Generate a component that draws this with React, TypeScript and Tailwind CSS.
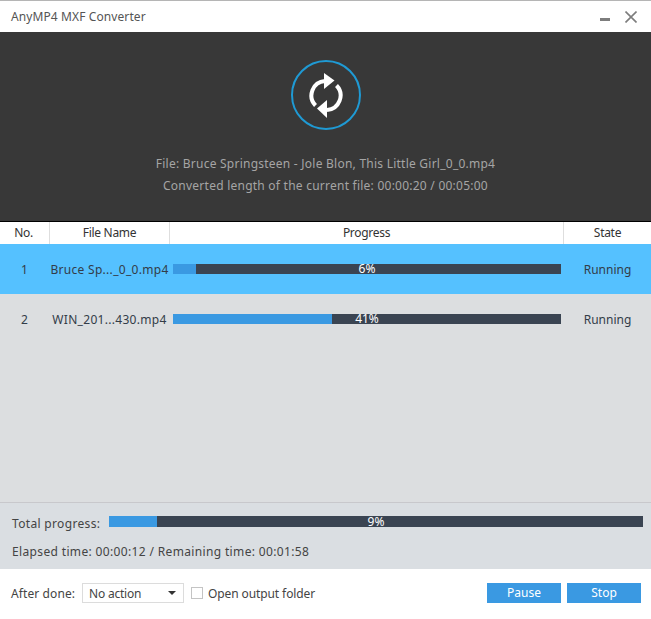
const font = "font-['Noto_Sans','Open_Sans',sans-serif]";

function Bar({ fill, label, className }: { fill: number; label: string; className: string }) {
  return (
    <div className={`relative bg-[#3a4452] ${className}`}>
      <div className="h-full bg-[#3a99e2]" style={{ width: fill }} />
      <span className="absolute inset-0 flex items-center justify-center text-[12px] leading-none text-white">
        {label}
      </span>
    </div>
  );
}

function Row({ no, name, fill, label, active }: { no: string; name: string; fill: number; label: string; active?: boolean }) {
  return (
    <div className={`flex h-[50px] items-center text-[12px] text-[#333c48] ${active ? "bg-[#55c1ff]" : ""}`}>
      <div className="w-[49px] pt-[2px] text-center">{no}</div>
      <div className="w-[124px] pr-[3px] pt-[2px] text-center tracking-[0.3px]">{name}</div>
      <Bar fill={fill} label={label} className="h-[10px] w-[388px]" />
      <div className="flex-1 pl-[3px] pt-[2px] text-center">Running</div>
    </div>
  );
}

function Refresh() {
  return (
    <div className="flex h-[70px] w-[70px] items-center justify-center rounded-full border-2 border-[#1f9ad4]">
      <svg width="34" height="45" viewBox="0 0 34 45" fill="none">
        <path d="M6.5 32.5A14.5 14.5 0 0 1 16 8" stroke="white" strokeWidth="4" />
        <path d="M15 0L25.5 7.5L15 16Z" fill="white" />
        <path d="M27.5 12.5A14.5 14.5 0 0 1 18 37" stroke="white" strokeWidth="4" />
        <path d="M18 27L8 35.5L18 45Z" fill="white" />
      </svg>
    </div>
  );
}

export default function App() {
  return (
    <main className={`flex h-[619px] w-[651px] flex-col overflow-hidden bg-white ${font}`}>
      <div className="h-px bg-[#b5b5b5]" />
      {/* TITLE */}
      <header className="flex h-[31px] items-center justify-between pl-[11px] pr-[14px]">
        <span className="text-[12px] tracking-[0.1px] text-[#555]">AnyMP4 MXF Converter</span>
        <div className="flex items-center gap-[15px]">
          <div className="mt-[6px] h-[3px] w-[10px] bg-[#7d7d7d]" />
          <svg width="12" height="12" viewBox="0 0 12 12" stroke="#7d7d7d" strokeWidth="1.6">
            <path d="M0.5 0.5L11.5 11.5M11.5 0.5L0.5 11.5" />
          </svg>
        </div>
      </header>

      {/* CONVERTING */}
      <section className="flex h-[190px] flex-col items-center border-b border-black bg-[#383838] pt-[28px] text-[12px] tracking-[0.24px] text-[#a5a5a5]">
        <Refresh />
        <p className="mt-[23px] leading-[22px]">File: Bruce Springsteen - Jole Blon, This Little Girl_0_0.mp4</p>
        <p className="leading-[22px]">Converted length of the current file: 00:00:20 / 00:05:00</p>
      </section>

      {/* TABLE */}
      <div className="flex h-[22px] items-center text-[12px] tracking-[-0.3px] text-[#333]">
        <div className="h-full w-[50px] border-r border-[#dedede] pr-[2px] text-center leading-[22px]">No.</div>
        <div className="h-full w-[120px] border-r border-[#dedede] text-center leading-[22px]">File Name</div>
        <div className="h-full w-[394px] border-r border-[#dedede] text-center leading-[22px]">Progress</div>
        <div className="flex-1 text-center">State</div>
      </div>
      <div className="flex h-[259px] flex-col border-b border-[#c8c8cc] bg-[#dcdee0]">
        <Row no="1" name="Bruce Sp..._0_0.mp4" fill={23} label="6%" active />
        <Row no="2" name="WIN_201...430.mp4" fill={159} label="41%" />
      </div>

      {/* TOTAL */}
      <section className="h-[66px] bg-[#dadee2] pl-[12px] pr-[8px] pt-[13px] text-[12px] text-[#444]">
        <div className="flex items-start">
          <span className="w-[97px] leading-[16px] tracking-[0.33px]">Total progress:</span>
          <Bar fill={48} label="9%" className="h-[11px] flex-1" />
        </div>
        <p className="mt-[11px] leading-[18px] tracking-[0.35px]">Elapsed time: 00:00:12 / Remaining time: 00:01:58</p>
      </section>

      {/* FOOTER */}
      <footer className="flex flex-1 items-center pb-[2px] pl-[11px] pr-[10px] text-[12px] text-[#444]">
        <span className="w-[71px] pt-[1px] tracking-[0.1px]">After done:</span>
        <div className="flex h-[20px] w-[102px] items-center justify-between border border-[#dcdcdc] pl-[6px] pr-[7px]">
          <span className="pt-[1px] tracking-[-0.2px]">No action</span>
          <span className="border-x-[4px] border-t-[4px] border-x-transparent border-t-[#333]" />
        </div>
        <span className="ml-[7px] h-[12px] w-[12px] border border-[#c4c4c4]" />
        <span className="ml-[5px] pt-[1px] tracking-[-0.1px]">Open output folder</span>
        <button className="ml-auto h-[20px] w-[74px] bg-[#3a99e2] text-[12px] text-white">Pause</button>
        <button className="ml-[6px] h-[20px] w-[74px] bg-[#3a99e2] text-[12px] text-white">Stop</button>
      </footer>
    </main>
  );
}
